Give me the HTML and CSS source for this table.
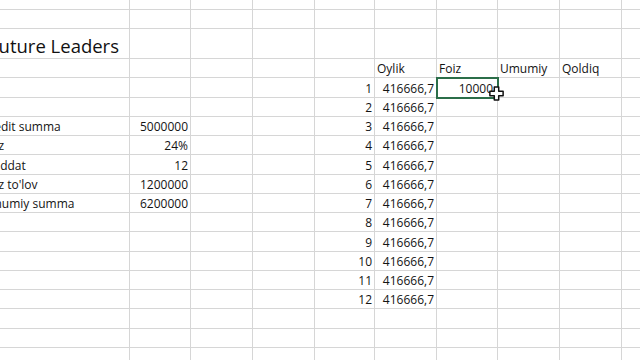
FILE: index.html
```html
<!DOCTYPE html>
<html lang="uz">
<head>
<meta charset="utf-8">
<title>Future Leaders</title>
<link rel="stylesheet" href="styles.css">
</head>
<body>
<div class="sheet">
  <!-- r0 -->
  <div class="c"></div><div class="c"></div><div class="c"></div><div class="c"></div><div class="c"></div><div class="c"></div><div class="c"></div><div class="c"></div><div class="c"></div><div class="c"></div>
  <!-- r1 -->
  <div class="c"></div><div class="c"></div><div class="c"></div><div class="c"></div><div class="c"></div><div class="c"></div><div class="c"></div><div class="c"></div><div class="c"></div><div class="c"></div>
  <!-- r2 title -->
  <div class="c t">Future Leaders</div><div class="c"></div><div class="c"></div><div class="c"></div><div class="c"></div><div class="c"></div><div class="c"></div><div class="c"></div><div class="c"></div><div class="c"></div>
  <!-- r3 headers -->
  <div class="c"></div><div class="c"></div><div class="c"></div><div class="c"></div><div class="c"></div><div class="c">Oylik</div><div class="c">Foiz</div><div class="c">Umumiy</div><div class="c">Qoldiq</div><div class="c"></div>
  <!-- r4 -->
  <div class="c"></div><div class="c"></div><div class="c"></div><div class="c"></div><div class="c r">1</div><div class="c r">416666,7</div>
  <div class="c r sel">10000<svg class="cursor" viewBox="-1 -1 17 17" width="15" height="15" aria-hidden="true"><polygon points="5,0 10,0 10,5 15,5 15,10 10,10 10,15 5,15 5,10 0,10 0,5 5,5" fill="#fff" stroke="#111" stroke-width="1.7" stroke-linejoin="round"/></svg></div>
  <div class="c"></div><div class="c"></div><div class="c"></div>
  <!-- r5 -->
  <div class="c"></div><div class="c"></div><div class="c"></div><div class="c"></div><div class="c r">2</div><div class="c r">416666,7</div><div class="c"></div><div class="c"></div><div class="c"></div><div class="c"></div>
  <!-- r6 -->
  <div class="c lbl">Kredit summa</div><div class="c r">5000000</div><div class="c"></div><div class="c"></div><div class="c r">3</div><div class="c r">416666,7</div><div class="c"></div><div class="c"></div><div class="c"></div><div class="c"></div>
  <!-- r7 -->
  <div class="c lbl">Foiz</div><div class="c r">24%</div><div class="c"></div><div class="c"></div><div class="c r">4</div><div class="c r">416666,7</div><div class="c"></div><div class="c"></div><div class="c"></div><div class="c"></div>
  <!-- r8 -->
  <div class="c lbl">Muddat</div><div class="c r">12</div><div class="c"></div><div class="c"></div><div class="c r">5</div><div class="c r">416666,7</div><div class="c"></div><div class="c"></div><div class="c"></div><div class="c"></div>
  <!-- r9 -->
  <div class="c lbl">Foiz to'lov</div><div class="c r">1200000</div><div class="c"></div><div class="c"></div><div class="c r">6</div><div class="c r">416666,7</div><div class="c"></div><div class="c"></div><div class="c"></div><div class="c"></div>
  <!-- r10 -->
  <div class="c lbl">Umumiy summa</div><div class="c r">6200000</div><div class="c"></div><div class="c"></div><div class="c r">7</div><div class="c r">416666,7</div><div class="c"></div><div class="c"></div><div class="c"></div><div class="c"></div>
  <!-- r11 -->
  <div class="c"></div><div class="c"></div><div class="c"></div><div class="c"></div><div class="c r">8</div><div class="c r">416666,7</div><div class="c"></div><div class="c"></div><div class="c"></div><div class="c"></div>
  <!-- r12 -->
  <div class="c"></div><div class="c"></div><div class="c"></div><div class="c"></div><div class="c r">9</div><div class="c r">416666,7</div><div class="c"></div><div class="c"></div><div class="c"></div><div class="c"></div>
  <!-- r13 -->
  <div class="c"></div><div class="c"></div><div class="c"></div><div class="c"></div><div class="c r">10</div><div class="c r">416666,7</div><div class="c"></div><div class="c"></div><div class="c"></div><div class="c"></div>
  <!-- r14 -->
  <div class="c"></div><div class="c"></div><div class="c"></div><div class="c"></div><div class="c r">11</div><div class="c r">416666,7</div><div class="c"></div><div class="c"></div><div class="c"></div><div class="c"></div>
  <!-- r15 -->
  <div class="c"></div><div class="c"></div><div class="c"></div><div class="c"></div><div class="c r">12</div><div class="c r">416666,7</div><div class="c"></div><div class="c"></div><div class="c"></div><div class="c"></div>
  <!-- r16 -->
  <div class="c"></div><div class="c"></div><div class="c"></div><div class="c"></div><div class="c"></div><div class="c"></div><div class="c"></div><div class="c"></div><div class="c"></div><div class="c"></div>
  <!-- r17 -->
  <div class="c"></div><div class="c"></div><div class="c"></div><div class="c"></div><div class="c"></div><div class="c"></div><div class="c"></div><div class="c"></div><div class="c"></div><div class="c"></div>
  <!-- r18 -->
  <div class="c"></div><div class="c"></div><div class="c"></div><div class="c"></div><div class="c"></div><div class="c"></div><div class="c"></div><div class="c"></div><div class="c"></div><div class="c"></div>
</div>
</body>
</html>
```
FILE: styles.css
```css
html, body {
  margin: 0;
  padding: 0;
  background: #ffffff;
}
body {
  width: 640px;
  height: 360px;
  overflow: hidden;
  font-family: "Open Sans", "Liberation Sans", sans-serif;
  color: #141414;
}
.sheet {
  display: grid;
  grid-template-columns: 150px 61px 62px 62px 60px 62px 61px 62px 62px 62px;
  grid-template-rows: 19px 19px 30px repeat(16, 19.25px);
  margin: -9px 0 0 -20px;
  width: max-content;
}
.c {
  box-sizing: border-box;
  border-right: 1px solid #d6d6d6;
  border-bottom: 1px solid #d6d6d6;
  display: flex;
  align-items: flex-end;
  padding: 0 2px;
  font-size: 12px;
  line-height: 16px;
  white-space: nowrap;
  min-width: 0;
}
.r {
  justify-content: flex-end;
}
.lbl {
  padding-left: 2px;
}
.t {
  font-size: 18.5px;
  line-height: 24px;
  padding-left: 9px;
  color: #111111;
}
.sel {
  position: relative;
  z-index: 1;
  outline: 2px solid #2b6e49;
  outline-offset: -1px;
  padding-right: 4px;
}
.cursor {
  position: absolute;
  left: 52px;
  top: 8px;
}
```
